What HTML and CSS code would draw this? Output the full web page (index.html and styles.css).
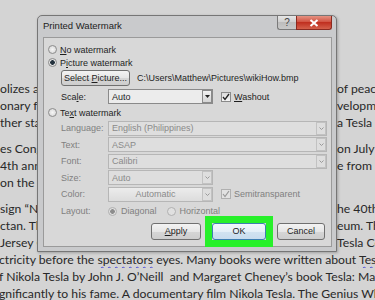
FILE: index.html
```html
<!DOCTYPE html>
<html lang="en">
<head>
    <meta charset="UTF-8">
    <meta name="viewport" content="width=device-width, initial-scale=1.0">
    <title>Printed Watermark</title>
    <link rel="stylesheet" href="styles.css">
</head>
<body>
    <div class="doc">
        <p>
            <span class="ln"><span>olizes a new age</span><span></span><span>of peace</span></span>
            <span class="ln"><span>onary far-reaching</span><span></span><span>velopment</span></span>
            <span class="ln"><span>ther states</span><span></span><span>a Tesla</span></span>
        </p>
        <p>
            <span class="ln"><span>es Congress</span><span></span><span>on July</span></span>
            <span class="ln"><span>4th anniversary</span><span></span><span>e from</span></span>
            <span class="ln"><span>on the site</span><span></span><span></span></span>
        </p>
        <p>
            <span class="ln"><span>sign “Nikola</span><span></span><span>he 40th</span></span>
            <span class="ln"><span>ctan. The</span><span></span><span>eum. The</span></span>
            <span class="ln"><span>Jersey City</span><span></span><span>Tesla Co</span></span>
            <span class="ln full">ctricity before the <span class="sp">spectators</span> eyes. Many books were written about <span class="sp">Tesla</span></span>
            <span class="ln full">f Nikola Tesla by John J. O’Neill &nbsp;and Margaret Cheney’s book Tesla: Man</span>
            <span class="ln full">gnificantly to his fame. A documentary film Nikola Tesla. The Genius Who</span>
        </p>
    </div>

    <div class="dlg">
        <div class="titlebar">
            <span class="title">Printed Watermark</span>
            <span class="cap help">?</span>
            <span class="cap close">
                <svg width="10" height="8" viewBox="0 0 10 8"><path d="M1.5 1l7 6M8.5 1l-7 6" stroke="#fff" stroke-width="2"/></svg>
            </span>
        </div>
        <div class="client">
            <div class="opt"><span class="radio"></span><span><u>N</u>o watermark</span></div>
            <div class="opt"><span class="radio on"></span><span>P<u>i</u>cture watermark</span></div>
            <div class="picrow">
                <button class="btn select" type="button">Select <u>P</u>icture...</button>
                <span>C:\Users\Matthew\Pictures\wikiHow.bmp</span>
            </div>
            <div class="row scale">
                <span class="lbl">Sca<u>l</u>e:</span>
                <div class="combo"><span>Auto</span>
                    <span class="dd"><svg width="5" height="3" viewBox="0 0 5 3"><path d="M0 0h5L2.5 3z" fill="#222"/></svg></span>
                </div>
                <span class="chk"><svg width="8" height="8" viewBox="0 0 8 8"><path d="M1 4l2 2.5L7 1" stroke="#222" stroke-width="1.3" fill="none"/></svg></span>
                <span><u>W</u>ashout</span>
            </div>
            <div class="opt textwm"><span class="radio"></span><span>Te<u>x</u>t watermark</span></div>
            <div class="row off">
                <span class="lbl">Language:</span>
                <div class="combo wide"><span>English (Philippines)</span>
                    <span class="dd"><svg width="5" height="3" viewBox="0 0 5 3"><path d="M0.5 0.5l2 2 2-2" stroke="#999" fill="none"/></svg></span>
                </div>
            </div>
            <div class="row off">
                <span class="lbl">Text:</span>
                <div class="combo wide"><span>ASAP</span>
                    <span class="dd"><svg width="5" height="3" viewBox="0 0 5 3"><path d="M0.5 0.5l2 2 2-2" stroke="#999" fill="none"/></svg></span>
                </div>
            </div>
            <div class="row off">
                <span class="lbl">Font:</span>
                <div class="combo wide"><span>Calibri</span>
                    <span class="dd"><svg width="5" height="3" viewBox="0 0 5 3"><path d="M0.5 0.5l2 2 2-2" stroke="#999" fill="none"/></svg></span>
                </div>
            </div>
            <div class="row off">
                <span class="lbl">Size:</span>
                <div class="combo"><span>Auto</span>
                    <span class="dd"><svg width="5" height="3" viewBox="0 0 5 3"><path d="M0.5 0.5l2 2 2-2" stroke="#999" fill="none"/></svg></span>
                </div>
            </div>
            <div class="row off">
                <span class="lbl">Color:</span>
                <div class="combo color"><span class="auto">Automatic</span>
                    <span class="dd"><svg width="5" height="3" viewBox="0 0 5 3"><path d="M0.5 0.5l2 2 2-2" stroke="#999" fill="none"/></svg></span>
                </div>
                <span class="chk"><svg width="8" height="8" viewBox="0 0 8 8"><path d="M1 4l2 2.5L7 1" stroke="#999" stroke-width="1.2" fill="none"/></svg></span>
                <span>Semitransparent</span>
            </div>
            <div class="row off">
                <span class="lbl">Layout:</span>
                <span class="radio on"></span><span class="rtext">Diagonal</span>
                <span class="radio"></span><span class="rtext">Horizontal</span>
            </div>
            <div class="btns">
                <button class="btn apply" type="button"><u>A</u>pply</button>
                <button class="btn ok" type="button">OK</button>
                <button class="btn cancel" type="button">Cancel</button>
            </div>
        </div>
    </div>
</body>
</html>
```

FILE: styles.css
```css
body {
    margin: 0;
    height: 300px;
    overflow: hidden;
    position: relative;
    background-color: #d4d4d4;
    font-family: Lato, "Liberation Sans", sans-serif;
}
.doc {
    padding-top: 80px;
    font-size: 12.2px;
    line-height: 17px;
    color: #282828;
}
.doc p {
    margin: 0 0 9px;
}
.ln {
    display: grid;
    grid-template-columns: 37px 1fr 38px;
    white-space: nowrap;
    overflow: hidden;
}
.ln span {
    overflow: hidden;
}
.ln.full {
    display: block;
    margin-left: -1px;
}
.ln .sp {
    overflow: visible;
    text-decoration: underline wavy #4a4ad8;
    text-decoration-thickness: 1px;
    text-underline-offset: 2px;
}

/* dialog */
.dlg {
    position: absolute;
    left: 37px;
    top: 15px;
    width: 300px;
    height: 237px;
    box-sizing: border-box;
    display: flex;
    flex-direction: column;
    padding: 0 4px 4px 5px;
    background-color: #c9cacc;
    border: 1px solid #767676;
    border-radius: 5px 5px 0 0;
    box-shadow: 1px 1px 3px rgba(0, 0, 0, 0.25);
    font-family: "Liberation Sans", sans-serif;
    font-size: 9px;
    color: #1e1e1e;
}
.titlebar {
    display: flex;
    align-items: flex-start;
    height: 21px;
}
.title {
    padding-top: 4px;
    line-height: 12px;
    font-size: 9.5px;
    color: #222;
}
.cap {
    height: 14px;
    display: flex;
    align-items: center;
    justify-content: center;
    box-sizing: border-box;
    border: 1px solid #7a7a7a;
    border-top: none;
}
.help {
    margin-left: auto;
    width: 19px;
    border-right: none;
    border-radius: 0 0 0 3px;
    background: linear-gradient(#e6e6e6, #cdcdcd 50%, #bdbdbd 50%, #c9c9c9);
    font-size: 10px;
    color: #444;
}
.close {
    width: 36px;
    border-radius: 0 0 3px 0;
    border-color: #8a2a20;
    background: linear-gradient(#e59282, #cf4c3b 50%, #c03020 50%, #d4604b);
}
.client {
    flex: 1;
    background-color: #d8d8d8;
    border: 1px solid #9a9a9a;
    padding: 5px 6px 0 4px;
}
.opt {
    display: flex;
    align-items: center;
    gap: 3px;
    height: 13px;
}
.opt.textwm {
    margin-top: 2px;
}
.radio {
    width: 9px;
    height: 9px;
    box-sizing: border-box;
    border-radius: 50%;
    border: 1px solid #8c8c8c;
    background: radial-gradient(circle, #f6f6f6, #d2d2d2);
    flex: none;
}
.radio.on {
    background: radial-gradient(circle, #24323e 0 2px, #e8e8e8 2.6px, #cfcfcf);
}
.picrow {
    display: flex;
    align-items: center;
    gap: 7px;
    height: 16px;
    margin: 1px 0 0 13px;
}
.btn {
    font: inherit;
    color: #1e1e1e;
    height: 16px;
    padding: 0;
    border: 1px solid #707070;
    border-radius: 3px;
    background: linear-gradient(#f3f3f3, #e6e6e6 50%, #d6d6d6 50%, #cdcdcd);
}
.btn.select {
    width: 69px;
}
.row {
    display: flex;
    align-items: center;
    height: 15px;
    margin: 1.6px 0 0 13px;
}
.row.scale {
    margin-top: 3px;
}
.lbl {
    width: 47px;
    flex: none;
}
.combo {
    width: 105px;
    height: 15px;
    box-sizing: border-box;
    display: flex;
    align-items: center;
    padding-left: 3px;
    border: 1px solid #8a8a8a;
    background-color: #ececec;
    flex: none;
}
.combo.wide {
    width: 219px;
}
.dd {
    margin-left: auto;
    width: 10px;
    height: 13px;
    box-sizing: border-box;
    display: flex;
    align-items: center;
    justify-content: center;
    border: 1px solid #8a8a8a;
    background: linear-gradient(#f2f2f2, #d4d4d4);
}
.chk {
    width: 10px;
    height: 10px;
    box-sizing: border-box;
    display: flex;
    align-items: center;
    justify-content: center;
    margin: 0 3px 0 8px;
    border: 1px solid #8a8a8a;
    background: linear-gradient(#dcdcdc, #f6f6f6);
}
.off {
    color: #808080;
}
.off .combo {
    border-color: #b6b6b6;
    background-color: #dedede;
    color: #8a8a8a;
}
.off .dd {
    border-color: #c2c2c2;
    background: #dedede;
}
.off .chk {
    border-color: #b0b0b0;
    background: #e2e2e2;
}
.off .radio {
    border-color: #b0b0b0;
    background: #e0e0e0;
}
.off .radio.on {
    background: radial-gradient(circle, #8c8c8c 0 2px, #e0e0e0 2.6px);
}
.combo.color {
    padding-left: 0;
    background: linear-gradient(#ececec, #dcdcdc);
}
.combo .auto {
    flex: 1;
    text-align: center;
}
.rtext {
    margin: 0 10px 0 4px;
}
.btns {
    display: flex;
    justify-content: flex-end;
    gap: 11px;
    margin-top: 4.4px;
}
.btns .btn {
    height: 17px;
}
.apply {
    width: 50px;
}
.ok {
    width: 54px;
    position: relative;
    border-color: #3c7fb1;
    background: linear-gradient(#f2f8fc, #e4eff8 50%, #d2e3f1 50%, #c8dcee);
}
.ok::after {
    content: "";
    position: absolute;
    inset: -8px;
    border: 7px solid #27f02a;
}
.cancel {
    width: 48px;
}
```
